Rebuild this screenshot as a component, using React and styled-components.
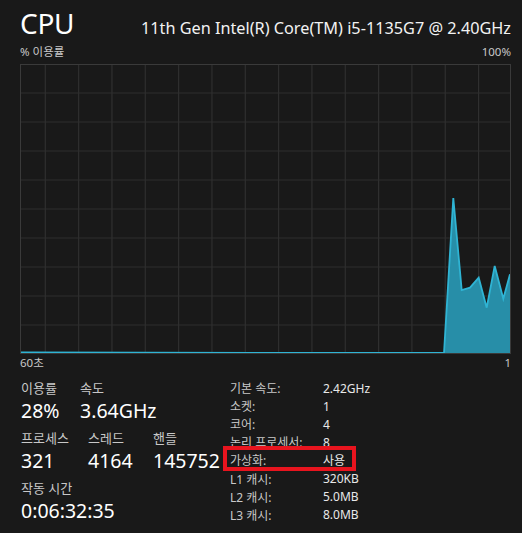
import React from "react"
import styled, { createGlobalStyle } from "styled-components"

const GlobalStyle = createGlobalStyle`
  html, body {
    margin: 0;
    padding: 0;
    background: #191919;
  }
  body {
    font-family: "Segoe UI", "Noto Sans", "Noto Sans CJK KR", sans-serif;
    color: #ffffff;
  }
`

//page
const Page = styled.div`
  width: 522px;
  height: 533px;
  box-sizing: border-box;
  padding: 0 11px 0 20px;
  overflow: hidden;
  background: #191919;
`

//header
const Header = styled.header`
  display: flex;
  justify-content: space-between;
  align-items: baseline;
  margin-top: 6px;
`

const Title = styled.h1`
  margin: 0;
  font-size: 28px;
  font-weight: 400;
  line-height: 34px;
  letter-spacing: -0.3px;
`

const Model = styled.div`
  font-size: 16.25px;
  line-height: 20px;
  color: #f2f2f2;
`

//axis captions above and below the graph
const AxisRow = styled.div`
  display: flex;
  justify-content: space-between;
  font-size: 11.5px;
  line-height: 16px;
  color: #c8c8c8;
  margin-top: ${props => props.$top || 0}px;
`

//graph
const Graph = styled.div`
  width: 491px;
  height: 290px;
  margin-top: 4px;
  box-sizing: border-box;
  border: 1px solid #3a3a3a;
  svg {
    display: block;
  }
`

//stats
const Stats = styled.section`
  display: grid;
  grid-template-columns: 210px 1fr;
  margin-top: 8px;
`

const StatGroup = styled.div`
  display: flex;
  flex-direction: column;
  gap: 4px;
  padding-top: 1px;
`

const StatRow = styled.div`
  display: flex;
  margin-left: 1px;
`

const StatCell = styled.div`
  width: ${props => props.$width}px;
  display: flex;
  flex-direction: column;
`

const StatLabel = styled.div`
  font-size: 13px;
  line-height: 17px;
  color: #c8c8c8;
`

const StatValue = styled.div`
  font-size: 19.5px;
  line-height: 27px;
  color: #ffffff;
  margin-bottom: 2px;
`

//details list
const Details = styled.dl`
  margin: 0;
  display: grid;
  grid-template-columns: 93px 1fr;
  grid-auto-rows: 18.1px;
  align-items: center;
  font-size: 12px;
`

const Term = styled.dt`
  color: #c8c8c8;
  white-space: nowrap;
  overflow: hidden;
`

const Desc = styled.dd`
  margin: 0;
  color: #e8e8e8;
`

const Pair = styled.div`
  display: contents;
`

//red annotation box over the 가상화 row
const Marked = styled.div`
  position: relative;
  grid-column: 1 / -1;
  display: grid;
  grid-template-columns: 93px 1fr;
  align-items: center;
  height: 100%;
  &::after {
    content: "";
    position: absolute;
    left: -7px;
    top: -5.6px;
    width: 133px;
    height: 25.6px;
    box-sizing: border-box;
    border: 4.6px solid #e8141e;
  }
`

const vLines = Array.from({ length: 14 }, (_, i) => 25.3 + i * 33.33)
const hLines = [29, 58, 87, 116, 145, 174, 203, 232, 261]

const samples = [
  [424, 289],
  [433.3, 134],
  [441.7, 226],
  [450, 223.7],
  [458.7, 213.7],
  [466.7, 243.7],
  [474.7, 202],
  [483.3, 234.7],
  [490, 210.3],
]

function CpuGraph() {
  const line = samples.map(p => p.join(",")).join(" ")
  return (
    <Graph>
      <svg width="489" height="288" viewBox="1 1 489 288">
        {vLines.map(x => (
          <line key={x} x1={x} x2={x} y1="0" y2="290" stroke="#2f2f2f" strokeWidth="1.2" />
        ))}
        {hLines.map(y => (
          <line key={y} x1="0" x2="491" y1={y} y2={y} stroke="#2f2f2f" strokeWidth="1.2" />
        ))}
        <polygon points={`0,289 ${line} 490,289`} fill="#278ea8" />
        <polyline points={`0,288.5 ${line}`} fill="none" stroke="#2fb4d4" strokeWidth="1.8" strokeLinejoin="miter" />
      </svg>
    </Graph>
  )
}

const details = [
  ["기본 속도:", "2.42GHz"],
  ["소켓:", "1"],
  ["코어:", "4"],
  ["논리 프로세서:", "8"],
  ["가상화:", "사용", true],
  ["L1 캐시:", "320KB"],
  ["L2 캐시:", "5.0MB"],
  ["L3 캐시:", "8.0MB"],
]

export default function App() {
  return (
    <Page>
      <GlobalStyle />
      <Header>
        <Title>CPU</Title>
        <Model>11th Gen Intel(R) Core(TM) i5-1135G7 @ 2.40GHz</Model>
      </Header>
      <AxisRow $top={4}>
        <span>% 이용률</span>
        <span>100%</span>
      </AxisRow>
      <CpuGraph />
      <AxisRow $top={1}>
        <span>60초</span>
        <span>1</span>
      </AxisRow>
      <Stats>
        <StatGroup>
          <StatRow>
            <StatCell $width={59}>
              <StatLabel>이용률</StatLabel>
              <StatValue>28%</StatValue>
            </StatCell>
            <StatCell $width={100}>
              <StatLabel>속도</StatLabel>
              <StatValue>3.64GHz</StatValue>
            </StatCell>
          </StatRow>
          <StatRow>
            <StatCell $width={67}>
              <StatLabel>프로세스</StatLabel>
              <StatValue>321</StatValue>
            </StatCell>
            <StatCell $width={65}>
              <StatLabel>스레드</StatLabel>
              <StatValue>4164</StatValue>
            </StatCell>
            <StatCell $width={70}>
              <StatLabel>핸들</StatLabel>
              <StatValue>145752</StatValue>
            </StatCell>
          </StatRow>
          <StatRow>
            <StatCell $width={100}>
              <StatLabel>작동 시간</StatLabel>
              <StatValue>0:06:32:35</StatValue>
            </StatCell>
          </StatRow>
        </StatGroup>
        <Details>
          {details.map(([k, v, marked]) =>
            marked ? (
              <Marked key={k}>
                <Term>{k}</Term>
                <Desc>{v}</Desc>
              </Marked>
            ) : (
              <Pair key={k}>
                <Term>{k}</Term>
                <Desc>{v}</Desc>
              </Pair>
            )
          )}
        </Details>
      </Stats>
    </Page>
  )
}
